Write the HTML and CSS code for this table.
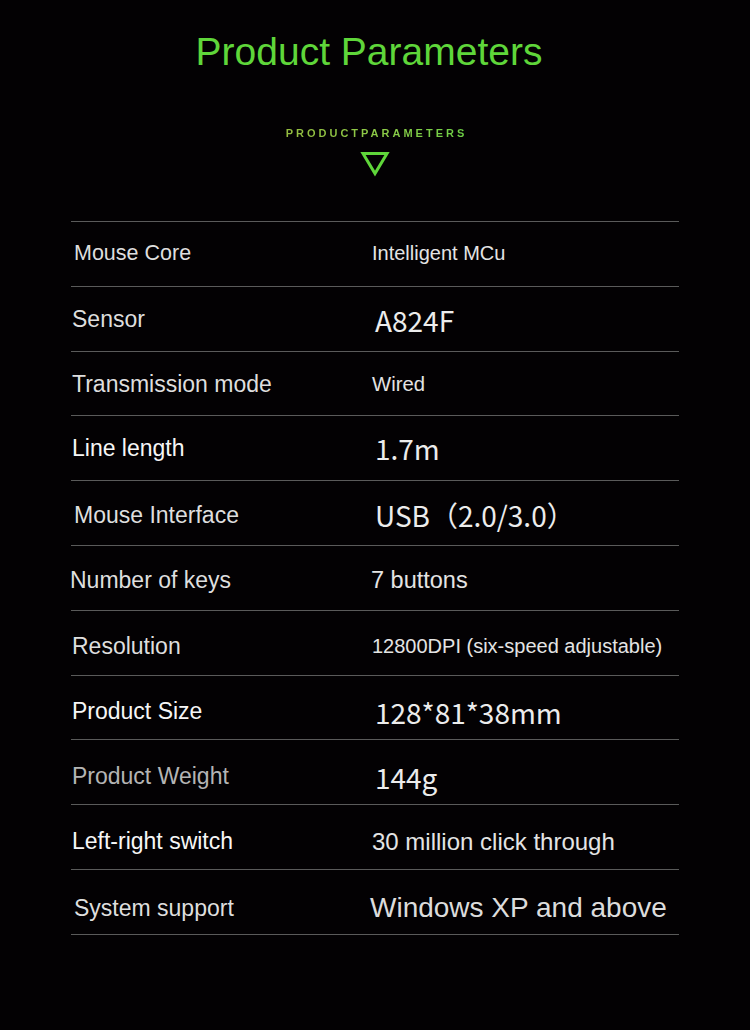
FILE: index.html
```html
<!DOCTYPE html>
<html>
<head>
<meta charset="utf-8">
<link rel="stylesheet" href="styles.css">
</head>
<body>
<div class="page">
  <h1 class="title">Product Parameters</h1>
  <div class="sub">PRODUCTPARAMETERS</div>
  <svg class="tri" width="30" height="26" viewBox="0 0 30 26"><polygon points="3,2.5 27,2.5 15,22.5" fill="none" stroke="#5fd63a" stroke-width="3" stroke-linejoin="miter"/></svg>
  <div class="table">
    <div class="row"><div class="k k-in k-sm">Mouse Core</div><div class="v v-s19">Intelligent MCu</div></div>
    <div class="row o1"><div class="k">Sensor</div><div class="v v-cjk">A824F</div></div>
    <div class="row o1"><div class="k">Transmission mode</div><div class="v v-s18">Wired</div></div>
    <div class="row"><div class="k k-w">Line length</div><div class="v v-cjk">1.7m</div></div>
    <div class="row o2"><div class="k k-in">Mouse Interface</div><div class="v v-cjk">USB（2.0/3.0）</div></div>
    <div class="row o3"><div class="k k-out">Number of keys</div><div class="v v-s21">7 buttons</div></div>
    <div class="row o4"><div class="k">Resolution</div><div class="v v-s20">12800DPI (six-speed adjustable)</div></div>
    <div class="row o5"><div class="k k-w">Product Size</div><div class="v v-cjk">128*81*38mm</div></div>
    <div class="row o5"><div class="k k-g">Product Weight</div><div class="v v-cjk">144g</div></div>
    <div class="row o5"><div class="k k-w">Left-right switch</div><div class="v v-s22">30 million click through</div></div>
    <div class="row o7"><div class="k k-in">System support</div><div class="v v-s28">Windows XP and above</div></div>
  </div>
</div>
</body>
</html>
```
FILE: styles.css
```css
html, body {
  margin: 0;
  padding: 0;
  background: #030103;
}
body {
  font-family: "Liberation Sans", Arial, sans-serif;
  width: 750px;
  height: 1030px;
  overflow: hidden;
}
.page {
  display: flex;
  flex-direction: column;
  align-items: center;
}
.title {
  margin: 30px 12px 0 0;
  font-weight: normal;
  font-size: 39px;
  line-height: 44px;
  color: #5fd63a;
}
.sub {
  margin-top: 52px;
  font-size: 11px;
  line-height: 14px;
  letter-spacing: 3px;
  margin-left: 3px;
  font-weight: bold;
  background: linear-gradient(90deg, #94bc40, #8ccc48 55%, #6cd046);
  -webkit-background-clip: text;
  background-clip: text;
  color: transparent;
}
.tri {
  margin-top: 11px;
  display: block;
}
.table {
  margin-top: 44px;
  width: 608px;
  border-top: 1px solid #5a5a5a;
}
.row {
  box-sizing: border-box;
  display: flex;
  align-items: center;
  height: 64.8px;
  border-bottom: 1px solid #5a5a5a;
}
.o1 { padding-top: 2px; }
.o2 { padding-top: 4px; }
.o3 { padding-top: 6px; }
.o4 { padding-top: 8px; }
.o5 { padding-top: 9px; }
.o7 { padding-top: 13px; }
.k {
  width: 300px;
  padding-left: 1px;
  font-size: 23px;
  color: #dedede;
}
.k-sm { font-size: 21.5px; }
.k-in { padding-left: 3px; width: 298px; }
.k-out { padding-left: 0; margin-left: -1px; width: 301px; }
.k-w { color: #f6f6f6; }
.k-g { color: #b4b4b4; }
.v {
  color: #e4e4e4;
}
.v-s18 { font-size: 20.3px; }
.v-s19 { font-size: 20px; }
.v-s20 { font-size: 20px; }
.v-s21 { font-size: 23.5px; }
.v-s22 { font-size: 24px; }
.v-s28 { font-size: 28px; margin-left: -2px; color: #dcdcdc; }
.v-cjk {
  font-family: "Noto Sans CJK SC", "Noto Sans", sans-serif;
  font-size: 28px;
  margin-left: 3px;
  color: #ececec;
}
```
